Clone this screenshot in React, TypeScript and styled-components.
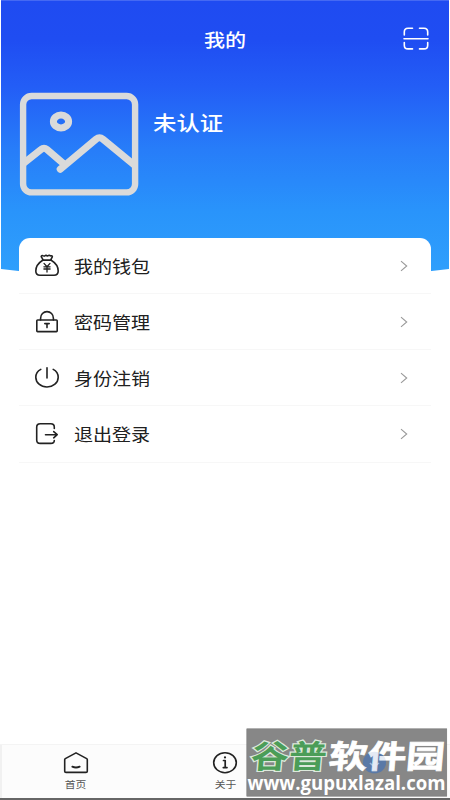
import React from "react";
import styled, { createGlobalStyle } from "styled-components";

const GlobalStyle = createGlobalStyle`
  * { box-sizing: border-box; }
  body { margin: 0; background: #fff; font-family: "Noto Sans CJK SC", sans-serif; }
`;

const Screen = styled.div`
  position: relative;
  display: flex;
  flex-direction: column;
  width: 450px;
  height: 800px;
  overflow: hidden;
  background: #fff;
`;

const Hero = styled.header`
  flex: none;
  height: 275px;
  padding: 0 1px;
  background: linear-gradient(#4569f3 0 1px, transparent 1px),
    linear-gradient(#1f4bf1 0, #1f4df2 40px, #235df6 85px, #277df9 150px, #2994fb 212px, #2f9ffc 272px);
  clip-path: path("M1 0H449V269Q225 298 1 269Z");
`;

const TitleBar = styled.div`
  display: grid;
  grid-template-columns: minmax(0, 1fr) auto minmax(0, 1fr);
  align-items: center;
  height: 78px;
`;

const Stretch = styled.span<{ $size: number; $scale: number; $weight?: number; $origin?: string }>`
  display: block;
  font-size: ${(p) => p.$size}px;
  font-weight: ${(p) => p.$weight ?? 400};
  line-height: 1.3;
  white-space: nowrap;
  transform: scaleX(${(p) => p.$scale});
  transform-origin: ${(p) => p.$origin ?? "left"} center;
`;

const Title = styled.h1`
  grid-column: 2;
  margin: 0;
  padding-top: 2px;
  color: #fff;
`;

const ScanButton = styled.button`
  justify-self: end;
  display: flex;
  margin-right: 20px;
  padding: 0;
  border: 0;
  background: none;
  color: #fff;
`;

const Profile = styled.section`
  display: flex;
  gap: 14px;
  padding: 14px 18px 0;
  color: #fff;
`;

const Status = styled.div`
  padding-top: 18px;
`;

const Menu = styled.nav`
  position: relative;
  flex: none;
  margin: -37.5px 19px 0;
  border-radius: 11px 11px 0 0;
  background: #fff;
`;

const MenuRow = styled.a`
  display: flex;
  align-items: center;
  height: 56.25px;
  padding: 1px 22px 0 15px;
  border-bottom: 1px solid #f7f7f7;
  color: #202020;
`;

const RowIcon = styled.span`
  display: flex;
  width: 39.5px;
`;

const Arrow = styled.span`
  display: flex;
  margin-left: auto;
`;

const TabBar = styled.footer`
  display: grid;
  grid-template-columns: repeat(3, 1fr);
  flex: none;
  height: 56px;
  margin-top: auto;
  padding: 0 0 2px 1px;
  border-top: 1px solid #f4f4f4;
  background: linear-gradient(90deg, #f1f1f1 0 2px, transparent 2px), #fcfcfc;
  border-bottom: 2px solid #666;
`;

const Tab = styled.a`
  display: flex;
  flex-direction: column;
  align-items: center;
  gap: 3px;
  padding-top: 6px;
  color: #555;
`;

const Watermark = styled.aside`
  position: absolute;
  left: 246px;
  top: 728px;
  width: 202px;
  height: 69px;

  svg {
    display: block;
    overflow: visible;
  }
`;

const Line = ({ children, w = 26, h = 24 }: { children: React.ReactNode; w?: number; h?: number }) => (
  <svg width={w} height={h} viewBox={`0 0 ${w} ${h}`} fill="none" stroke="#222" strokeWidth="1.6" strokeLinecap="round" strokeLinejoin="round">
    {children}
  </svg>
);

const WalletIcon = () => (
  <Line>
    <path d="M9 5.6 7.2 2.6Q7.5 1.2 9 1.7L10.3 2.1 12 1.3 13.3 1.9 15.2 1.3 17 1.9Q18.8 1.6 18.2 3.1L16.8 5.6M8.5 6.1H17.3" />
    <path d="M8.7 6.2C5 8.5 1.8 12.2 1.8 17Q1.8 21.2 6 21.2H20Q24.2 21.2 24.2 17C24.2 12.2 21 8.5 17.2 6.2" />
    <path d="m10 9.4 3 3.4 3-3.4M9.9 12.8H16.1M9.9 15H16.1M13 12.8V18" strokeWidth="1.3" />
  </Line>
);

const LockIcon = () => (
  <Line>
    <path d="M6.6 10V8.2C6.6 4.4 9.4 1.6 13 1.6S19.4 4.4 19.4 8.2V10" />
    <rect x="2.8" y="10" width="20.4" height="11.6" rx=".8" />
    <path d="M10.8 13.6H15.2M13 13.6V17.6" />
  </Line>
);

const PowerIcon = () => (
  <Line>
    <path d="M6.8 3.4C3.8 5 1.8 7.8 1.8 11.2 1.8 16.8 6.8 21 13 21S24.2 16.8 24.2 11.2C24.2 7.8 22.2 5 19.2 3.4M13 1.8V12" />
  </Line>
);

const ExitIcon = () => (
  <Line>
    <path d="M20.3 6.4V5.2Q20.3 1.8 16.8 1.8H6.2Q2.7 1.8 2.7 5.2V18Q2.7 21.4 6.2 21.4H16.8Q20.3 21.4 20.3 18.5M11.5 12.7H23M19.7 9.6 23.2 12.7 19.7 15.8" />
  </Line>
);

const rows = [
  { label: "我的钱包", Icon: WalletIcon },
  { label: "密码管理", Icon: LockIcon },
  { label: "身份注销", Icon: PowerIcon },
  { label: "退出登录", Icon: ExitIcon },
];

const PicturePlaceholder = () => (
  <svg width="120" height="104" viewBox="0 0 120 104" fill="none" stroke="#dadada" strokeLinecap="round" strokeLinejoin="round">
    <rect x="4.1" y="4" width="112" height="96.4" rx="8.5" strokeWidth="6.4" />
    <ellipse cx="42" cy="29.5" rx="7.6" ry="6.4" strokeWidth="7" />
    <path d="M5 71 22 57.5Q25 55 28 57.5L45.5 72.5M41.2 77.2 77 47.2Q80.5 44.3 84 47.2L115 72.8" strokeWidth="7" />
  </svg>
);

const SiteMark = () => (
  <svg width="202" height="69" viewBox="0 0 202 69">
    <rect x=".8" y=".8" width="200" height="67.4" fill="#878787" stroke="#707070" strokeWidth=".5" />
    <ellipse cx="128.5" cy="34.5" rx="11.5" ry="10.8" fill="#4775b5" opacity=".65" />
    <path d="M124 35q4 5 9 0" fill="none" stroke="#a9c5e6" strokeWidth="1.5" />
    <g fontFamily="'Noto Sans CJK SC', sans-serif" fontWeight="700" fontSize="32" transform="translate(4 39.5) skewX(-5)">
      <text x="0" y="0" textLength="76" lengthAdjust="spacingAndGlyphs" fill="#4b9d58" stroke="#dce9dc" strokeWidth="2.4" paintOrder="stroke">谷普</text>
      <text x="78" y="0" textLength="116" lengthAdjust="spacingAndGlyphs" fill="#fff" stroke="#fff" strokeWidth=".7">软件园</text>
    </g>
    <ellipse cx="128.5" cy="34.5" rx="11.5" ry="10.8" fill="#4775b5" opacity=".15" />
    <text x="1.5" y="61.5" textLength="198" lengthAdjust="spacingAndGlyphs" fill="#fff" fontFamily="'Open Sans', sans-serif" fontWeight="700" fontSize="19">www.gupuxlazal.com</text>
  </svg>
);

export default function App() {
  return (
    <>
      <GlobalStyle />
      <Screen>
        <Hero>
          <TitleBar>
            <Title><Stretch $size={18} $scale={1.17} $weight={500} $origin="center">我的</Stretch></Title>
            <ScanButton aria-label="扫一扫">
              <svg width="26" height="24" viewBox="0 0 26 24" fill="none" stroke="currentColor" strokeWidth="1.6" strokeLinecap="round">
                <path d="M1.3 8V5Q1.3 1.3 5 1.3H9.5M16.5 1.3H21Q24.7 1.3 24.7 5V8M1.3 15.5V18.2Q1.3 21.9 5 21.9H9.5M16.5 21.9H21Q24.7 21.9 24.7 18.2V15.5M1 11.7H25" />
              </svg>
            </ScanButton>
          </TitleBar>
          <Profile>
            <PicturePlaceholder />
            <Status><Stretch $size={20} $scale={1.17} $weight={500}>未认证</Stretch></Status>
          </Profile>
        </Hero>
        <Menu>
          {rows.map(({ label, Icon }) => (
            <MenuRow key={label}>
              <RowIcon><Icon /></RowIcon>
              <Stretch $size={17} $scale={1.12}>{label}</Stretch>
              <Arrow>
                <svg width="10" height="12" viewBox="0 0 10 12" fill="none" stroke="#999" strokeWidth="1.1"><path d="m2 1.2 5.7 4.8L2 10.8" /></svg>
              </Arrow>
            </MenuRow>
          ))}
        </Menu>
        <TabBar>
          <Tab>
            <Line>
              <path d="M1.7 8.6Q1.7 8 2.3 7.6L13 1.9 23.7 7.6Q24.3 8 24.3 8.6V20.2Q24.3 21.4 23 21.4H3Q1.7 21.4 1.7 20.2Z" />
              <path d="M9.3 15.6Q13 17.4 16.7 15.6" strokeWidth="1.8" />
            </Line>
            <Stretch $size={9.5} $scale={1.14} $origin="center">首页</Stretch>
          </Tab>
          <Tab>
            <Line>
              <ellipse cx="13" cy="11.7" rx="11.3" ry="10" />
              <path d="M11.5 9.5H13.2V16.5M11.3 16.6H15" strokeWidth="1.7" />
              <circle cx="13" cy="6.4" r="1.1" fill="#222" stroke="none" />
            </Line>
            <Stretch $size={9.5} $scale={1.14} $origin="center">关于</Stretch>
          </Tab>
        </TabBar>
        <Watermark><SiteMark /></Watermark>
      </Screen>
    </>
  );
}
